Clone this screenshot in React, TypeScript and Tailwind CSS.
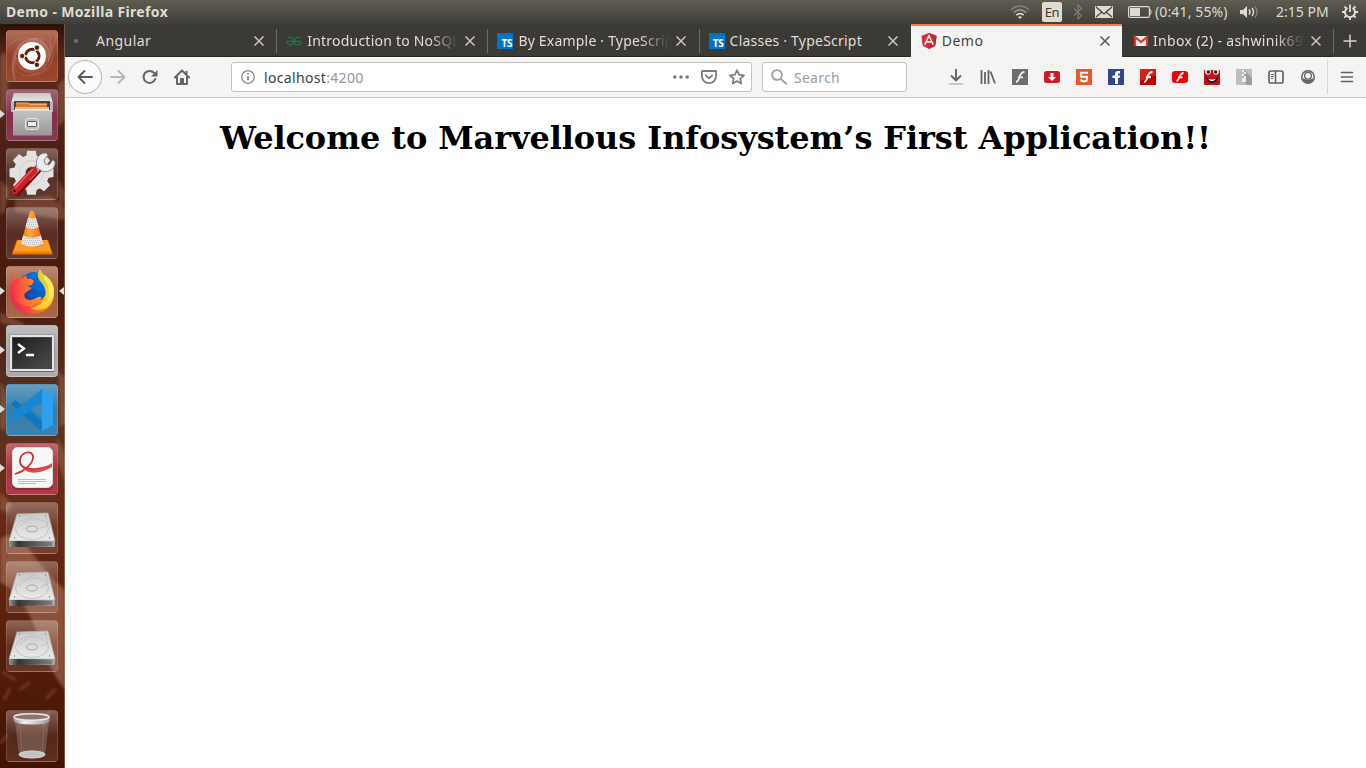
import React from "react";

type Kids = { children?: React.ReactNode };

function Icon({ children, size = 16, box = "0 0 16 16", className = "" }: Kids & { size?: number; box?: string; className?: string }) {
  return (
    <svg width={size} height={size} viewBox={box} fill="none" className={`block shrink-0 ${className}`}>
      {children}
    </svg>
  );
}

/* ---------- system panel ---------- */

function SystemBar() {
  return (
    <header className="flex h-6 shrink-0 items-center bg-linear-to-b from-[#5f5d51] to-[#3f3e39] text-[14px] leading-6 text-[#dfdbd2]">
      <div className="pl-[6px] text-[14px] font-bold tracking-[0.36px]">Demo - Mozilla Firefox</div>
      <div className="ml-auto flex h-6 items-center">
        <svg width="20" height="16" viewBox="0 0 20 16" fill="none" className="mr-[12px]" strokeWidth="1.6">
          <path d="M.8 6Q10-2 19.200 6" stroke="#85837a" />
          <path d="M3.600 8.600Q10 3 16.400 8.600" stroke="#96938a" />
          <path d="M6.300 11.200Q10 8 13.700 11.200" stroke="#dfdbd2" />
          <path d="M8 13Q10 11.400 12 13L10 15Z" fill="#dfdbd2" />
        </svg>
        <span className="mr-[10px] flex h-5 w-5 items-center justify-center rounded-[2px] bg-[#dfdbd2] text-[13px] tracking-[-0.4px] text-[#3c3b37]">En</span>
        <svg width="12" height="16" viewBox="0 0 12 16" fill="none" stroke="#7d7b73" strokeWidth="1.2" className="mr-[11px]">
          <path d="M2 4.500 9.500 11.500 6 15V1l3.500 3.500L2 11.500" />
        </svg>
        <svg width="18" height="12" viewBox="0 0 18 12" className="mr-[15px]">
          <rect width="18" height="12" fill="#dfdbd2" />
          <path d="m1 1 6 5-6 5M17 1l-6 5 6 5M1 1l8 7 8-7" fill="none" stroke="#45443e" strokeWidth="1.2" />
        </svg>
        <svg width="24" height="12" viewBox="0 0 24 12" className="mr-[3px]" fill="none">
          <rect x=".6" y=".6" width="20.800" height="10.800" rx="1.500" stroke="#dfdbd2" strokeWidth="1.200" />
          <rect x="2" y="2" width="10" height="8" fill="#dfdbd2" />
          <path d="M22.500 3.500q1.500 2.500 0 5" stroke="#dfdbd2" />
        </svg>
        <span className="w-[73px] whitespace-nowrap text-[14px] tracking-[0.13px]">(0:41, 55%)</span>
        <svg width="20" height="16" viewBox="0 0 20 16" className="ml-[12px] mr-[16px]" fill="none" strokeWidth="1.400">
          <path d="M0 6h3l4-4v12l-4-4H0z" fill="#dfdbd2" />
          <path d="M9 5.500q2 2.500 0 5M12 4q3 4 0 8" stroke="#dfdbd2" />
          <path d="M15 2.500q4 5.500 0 11" stroke="#85837a" />
        </svg>
        <span className="w-[54px] whitespace-nowrap text-[14px] tracking-[0.02px]">2:15 PM</span>
        <svg width="16" height="16" viewBox="0 0 16 16" className="ml-[12px] mr-[8px]" fill="none" stroke="#dfdbd2">
          <path d="M5.500 3.900a5 5 0 1 0 5 0" strokeWidth="2" />
          <path d="M8 .500v7.500" strokeWidth="1.800" />
          <path d="M3 8H0M16 8h-3M4.500 11.500l-2.200 2.200M11.500 11.500l2.200 2.200M8 13v3M4.300 4.300 2.500 2.500M11.700 4.300l1.800-1.800" strokeWidth="1.800" />
        </svg>
      </div>
    </header>
  );
}

/* ---------- launcher ---------- */

function UbuntuLogo() {
  return (
    <Icon size={52} box="0 0 52 52">
      <g stroke="#fff" strokeOpacity=".16" fill="none" strokeWidth=".8">
        <path d="M10 51C1 33 8 10 29 8s24 25 8 32M51 5C43 22 46 40 27 45S4 29 15 16" />
        <path d="M1 18C10 5 30 4 42 18s-4 29-18 26" />
      </g>
      <path d="M9 51C2 34 7 8 29 8c12 1 18 14 14 25C39 17 23 6 13 19 7 29 9 40 9 51" fill="#fff" opacity=".14" />
      <path d="M43 2c6 20 1 38-17 41C14 44 7 34 9 24c6 12 18 16 27 9 8-7 8-20 7-31" fill="#fff" opacity=".1" />
      <circle cx="26" cy="26" r="14" fill="#fff" />
      <circle cx="26.300" cy="26" r="6.800" stroke="#5f210c" strokeWidth="3" />
      <path d="m26 26 7-12M26 26l7 12M26 26H14" stroke="#fff" strokeWidth="1.300" />
      <circle cx="26.300" cy="26" r="5.200" fill="#fff" />
      <g fill="#5f210c" stroke="#fff" strokeWidth=".9">
        <circle cx="16.200" cy="26" r="2.700" /><circle cx="30.900" cy="17.700" r="2.700" /><circle cx="30.900" cy="34.800" r="2.700" />
      </g>
    </Icon>
  );
}

function FilesLogo() {
  return (
    <Icon size={52} box="0 0 52 52">
      <path d="M8 4h36l3 10v9H5v-9z" fill="#b5b5b5" />
      <path d="M8 4h36l2.500 9h-41z" fill="url(#cabtop)" />
      <path d="M8 12h36v10H8z" fill="#4a4340" />
      <path d="M10 14h31v8H10z" fill="#dd792f" />
      <path d="M10 14h12l2 1.500h17" stroke="#f7b064" />
      <path d="M9 18h34v4H9z" fill="#f7ead9" /><path d="M9 19h34" stroke="#e77b28" />
      <rect x="7" y="21" width="39" height="26" rx="1" fill="url(#drawer)" />
      <path d="M7 21.500h39" stroke="#dadada" />
      <path d="M7 46.500h39" stroke="#747474" />
      <rect x="19.500" y="29.500" width="13" height="11" rx="2" fill="#bcbcbc" stroke="#e4e4e4" />
      <rect x="21.500" y="32.500" width="9" height="5" rx="1" fill="#eee" stroke="#555" />
      <defs>
        <linearGradient id="cabtop" x2="0" y2="1"><stop stopColor="#c8c8c8" /><stop offset="1" stopColor="#e6e6e6" /></linearGradient>
        <linearGradient id="drawer" x2="0" y2="1"><stop stopColor="#c4c4c4" /><stop offset="1" stopColor="#969696" /></linearGradient>
      </defs>
    </Icon>
  );
}

function SettingsLogo() {
  return (
    <Icon size={52} box="0 0 52 52">
      <g transform="translate(25.500 24.700)">
        <g fill="#e2e2e0">
          <circle r="17.800" />
          {[0, 45, 90, 135, 180, 225, 270, 315].map((a) => (
            <path key={a} d="M-5.500-15-4.300-22H4.300L5.500-15Z" transform={`rotate(${a})`} />
          ))}
        </g>
        <circle r="12" stroke="#cfcfcd" />
        <circle r="6" fill="#4f2316" stroke="#b5b5b1" />
      </g>
      <path d="m11 44 21-23" stroke="#7c1013" strokeWidth="8" strokeLinecap="round" />
      <path d="m22 31 12-13" stroke="#ccc" strokeWidth="5" />
      <path d="M31 20c-2-8 1-15 9-15l2 2-4 5 1 4 4 1 4-5 2 2c0 8-7 11-13 9z" fill="#ededed" stroke="#8d8d8d" />
      <path d="m9 42.500 19-20" stroke="#c9242a" strokeWidth="7" strokeLinecap="round" />
      <path d="m9 40 18-19" stroke="#e86464" strokeWidth="1.200" />
      <circle cx="8.500" cy="43" r="1.200" fill="#4a0608" />
    </Icon>
  );
}

function VlcLogo() {
  return (
    <Icon size={52} box="0 0 52 52">
      <path d="M11 33h31l4.500 14H6z" fill="#f58a0c" /><path d="M12 33h29l4 11H8z" fill="#ff9d23" />
      <path d="M6 46.500h40.500V48H6z" fill="#bb5700" />
      <path d="M24 4.500q2-2 4 0l9.500 33q-11.500 6-23 0z" fill="url(#cone)" />
      <path d="M22.200 10.500q3.800 2.500 7.600 0l2.900 9.500q-6.700 3.500-13.300 0zM17.200 28.500q8.800 4.500 17.600 0l2.500 8.500q-11.300 5-22.600 0z" fill="#e6e7e8" />
      <path d="M22 13.500h8M21 15.500h10M21 17.500h10M20 19.500h12M18 31.500h16M17 33.500h18M16 35.500h20M16 37.500h20" stroke="#b8b8b8" strokeDasharray="1 1" />
      <defs><linearGradient id="cone"><stop stopColor="#e96900" /><stop offset=".4" stopColor="#ffa844" /><stop offset="1" stopColor="#e46200" /></linearGradient></defs>
    </Icon>
  );
}

function FirefoxLogo() {
  return (
    <Icon size={52} box="0 0 52 52">
      <path d="M7 8v6l4-3h6l9 4 9-6c8 4 13 10 13 18 0 12-9 21-22 21S4 39 4 27c0-8 1-13 3-19" fill="url(#fox)" />
      <path d="M16 11c3-3 8-5 12-5 10 0 15 9 13 19-2 9-12 14-20 10S12 20 16 11" fill="url(#globe)" />
      <path d="M5 22c1-5 4-9 8-11l3 1 4-3 1 4c3-1 5 0 7 2l-2 4-5 1 5 2-7 5c-2 4 1 7 5 7 5 0 7-4 11-3 1 1-1 4-3 5-7 7-19 5-24-5" fill="url(#head)" />
      <path d="M34 3c-3 4-3 9 1 13 7 8 6 18-2 23-3 2-6 3-9 3 12 6 25-3 24-16 0-7-3-12-8-16-3-2-5-4-6-7" fill="#ffd52b" opacity=".9" />
      <path d="M39 14c5 7 6 17 0 24 8-4 11-14 7-21-2-4-5-6-8-8 0 2 0 3 1 5" fill="#ffee58" />
      <defs>
        <linearGradient id="globe" x1="1" x2="0" y2="1"><stop stopColor="#0a86e0" /><stop offset=".5" stopColor="#0560c8" /><stop offset="1" stopColor="#1b2b83" /></linearGradient>
        <linearGradient id="fox" x1="1" x2="0" y1=".2" y2=".7"><stop stopColor="#ffe43a" /><stop offset=".4" stopColor="#ff8f23" /><stop offset=".7" stopColor="#ff4a3b" /><stop offset="1" stopColor="#ea2052" /></linearGradient>
        <linearGradient id="head" x1="1" x2="0"><stop stopColor="#ff9a20" /><stop offset=".5" stopColor="#ff6a30" /><stop offset="1" stopColor="#f0304a" /></linearGradient>
      </defs>
    </Icon>
  );
}

function TerminalLogo() {
  return (
    <Icon size={52} box="0 0 52 52">
      <rect x="3.500" y="9.500" width="45" height="37" rx="1.500" fill="#e6e6e6" stroke="#9c9c9c" />
      <rect x="6.500" y="12.500" width="39" height="31" fill="url(#term)" stroke="#444" />
      <path d="m12 19 6 4.500-6 4.500M20 30h8" stroke="#fff" strokeWidth="2.300" />
      <path d="M4 46.500h44" stroke="#666" />
      <defs><linearGradient id="term" x2="1" y2="1"><stop stopColor="#1c1c1c" /><stop offset="1" stopColor="#4b4d4b" /></linearGradient></defs>
    </Icon>
  );
}

function CodeLogo() {
  return (
    <Icon size={52} box="0 0 52 52">
      <path d="m5 20 4-4 28 22v8L33 45z" fill="#0f78c0" />
      <path d="M36 5l1 14L10 36l-5-3v-3z" fill="#1a86d0" />
      <path d="m36 5 11 5v31l-11 6z" fill="#2f9ff0" />
      <path d="M36 18v16L25 26z" fill="#4488b4" />
    </Icon>
  );
}

function EvinceLogo() {
  return (
    <Icon size={52} box="0 0 52 52">
      <rect x="6" y="5" width="41" height="42" rx="5" fill="#6c2025" opacity=".5" />
      <rect x="6.500" y="4.500" width="40" height="40" rx="5" fill="#f8f8f8" stroke="#ddd" />
      <path d="M9 31C20 28 28 19 27 13 25 7 15 9 14 17s10 13 32 5" stroke="#cf2f35" strokeWidth="1.800" />
      <path d="M16 24C24 29 36 27 46 20v4C34 31 21 32 16 24" fill="#e04a4a" />
      <path d="M12 36.500h28M12 38.500h28M12 40.500h18" stroke="#bbb" />
    </Icon>
  );
}

function DriveLogo() {
  return (
    <Icon size={52} box="0 0 52 52">
      <path d="m11 12 31-1 7 28H3z" fill="url(#disk)" stroke="#b5b5b5" strokeWidth=".7" />
      <path d="M3 39h46v5q0 1-1 1H4q-1 0-1-1z" fill="url(#diskfront)" />
      <ellipse cx="26" cy="27" rx="16.500" ry="10.500" stroke="#c4c4c4" />
      <path d="M12 14q8-2 16 0l-7 5q-5 2-8 6M40 15l2 8-7 3" stroke="#c2c2c2" />
      <ellipse cx="26" cy="27" rx="5.500" ry="3" fill="#ddd" stroke="#aaa" />
      <path d="M8 36h1M43 36h1M13 14h1M39 14h1" stroke="#888" strokeWidth="1.500" />
      <path d="M11 40h35v4H11z" fill="#3c3c3c" opacity=".35" />
      <defs>
        <linearGradient id="disk" x2="0" y2="1"><stop stopColor="#cacaca" /><stop offset="1" stopColor="#eaeaea" /></linearGradient>
        <linearGradient id="diskfront"><stop stopColor="#999" /><stop offset=".2" stopColor="#333" /><stop offset="1" stopColor="#aaa" /></linearGradient>
      </defs>
    </Icon>
  );
}

function TrashLogo() {
  return (
    <Icon size={52} box="0 0 52 52">
      <path d="m9 12 4 33q13 5 26 0l4-33z" fill="#ddd" opacity=".22" />
      <path d="m14 14 2 30M38 14l-2 30" stroke="#ddd" strokeOpacity=".15" />
      <ellipse cx="26" cy="44.500" rx="13" ry="3.500" fill="#c4c4be" stroke="#d8d8d4" />
      <path d="M7.500 7v4q3 3.500 18.500 3.500T43.500 11V7z" fill="url(#rim)" />
      <ellipse cx="25.500" cy="7" rx="17.500" ry="3.300" fill="#8a766e" stroke="#e6e6e6" strokeWidth="1.500" />
      <defs><linearGradient id="rim"><stop stopColor="#8f8f8f" /><stop offset=".3" stopColor="#f2f2f2" /><stop offset=".6" stopColor="#d0d0d0" /><stop offset="1" stopColor="#9a9a9a" /></linearGradient></defs>
    </Icon>
  );
}

function Tile({ children, tint = "bg-white/8", running = false, focused = false }: Kids & { tint?: string; running?: boolean; focused?: boolean }) {
  return (
    <div className="relative flex h-[52px] w-full shrink-0 justify-start pl-[6px]">
      <div className={`relative h-[52px] w-[52px] overflow-hidden rounded-[4px] ${tint}`}>
        <div className="absolute inset-0 rounded-[4px] border border-white/14 bg-linear-to-b from-white/25 via-transparent to-white/5" />
        <div className="relative">{children}</div>
      </div>
      {running && <span className="absolute top-[21px] left-0 h-0 w-0 border-y-[4.5px] border-l-[5px] border-y-transparent border-l-[#ddd]" />}
      {focused && <span className="absolute top-[21px] right-[1px] h-0 w-0 border-y-[4.5px] border-r-[5px] border-y-transparent border-r-[#ddd]" />}
    </div>
  );
}

function Wallpaper() {
  return (
    <svg className="absolute inset-0" width="65" height="744" viewBox="0 24 65 744" preserveAspectRatio="none">
      <defs>
        <linearGradient id="wall" x2="0" y2="1">
          <stop stopColor="#2c1109" /><stop offset=".05" stopColor="#5c2a1a" /><stop offset=".18" stopColor="#4b1f14" /><stop offset=".36" stopColor="#4b1b10" />
          <stop offset=".52" stopColor="#5a3220" /><stop offset=".65" stopColor="#662c18" /><stop offset=".8" stopColor="#5c210c" /><stop offset="1" stopColor="#421305" />
        </linearGradient>
        <filter id="soft"><feGaussianBlur stdDeviation="1.500" /></filter>
      </defs>
      <rect y="24" width="65" height="744" fill="url(#wall)" />
      <g filter="url(#soft)" fill="#b98267">
        <path opacity=".35" d="M0 58q8-18 8 20t-8 42zM58 85l7-7v40l-7 10zM0 180l9 9-4 22-5 4zM58 180l7 12-5 29zM15 200l35-4 15 12v12l-50-8z" />
        <path opacity=".35" d="M0 312q20 10 25 12l-3 3-22-4zM0 382q9 9 7 34t-7 9zM58 370l7 8v46l-5 3zM57 438l8 14v30l-9-24zM0 492l12 12-3 9-9-3z" />
        <path opacity=".5" d="M0 540q10-12 30 10 16 24 35 40v100q-17-22-26-51Q25 595 0 582z" />
      </g>
      <g filter="url(#soft)" stroke="#b5633f" strokeWidth="2" strokeOpacity=".55">
        <path d="m2 672 14 8M20 690l10-8M46 699l9-10M50 710l-8 16M4 700l6-12M0 743l8-8" />
      </g>
      <path d="M64.500 24v744" stroke="#d7cac1" strokeOpacity=".35" />
    </svg>
  );
}

function Launcher() {
  return (
    <aside className="relative w-[65px] shrink-0 overflow-hidden">
      <Wallpaper />
      <div className="relative flex h-full flex-col gap-[7px] pt-[6px] pb-[6px]">
        <Tile tint="bg-[#963f27]"><UbuntuLogo /></Tile>
        <Tile tint="bg-[#84304a]" running><FilesLogo /></Tile>
        <Tile><SettingsLogo /></Tile>
        <Tile><VlcLogo /></Tile>
        <Tile tint="bg-[#a3603f]" running focused><FirefoxLogo /></Tile>
        <Tile tint="bg-[#aaa6a8]" running><TerminalLogo /></Tile>
        <Tile tint="bg-[#347dab]" running><CodeLogo /></Tile>
        <Tile tint="bg-[#ad323c]" running><EvinceLogo /></Tile>
        <Tile><DriveLogo /></Tile>
        <Tile><DriveLogo /></Tile>
        <Tile><DriveLogo /></Tile>
        <div className="mt-auto"><Tile><TrashLogo /></Tile></div>
      </div>
    </aside>
  );
}

/* ---------- browser tabs ---------- */

function TsIcon() {
  return (
    <span className="flex h-4 w-4 shrink-0 items-end justify-end bg-[#0076c6] pr-px text-[10px] leading-[11px] font-bold tracking-[-0.2px] text-white">TS</span>
  );
}

function Tab({ icon, title, tracking, active = false, fade = false, divider = true }: { icon: React.ReactNode; title: string; tracking: string; active?: boolean; fade?: boolean; divider?: boolean }) {
  return (
    <div className={`relative flex h-[33px] w-[211.2px] shrink-0 items-center pl-[10px] ${active ? "ml-px border-t-2 border-[#f08050] bg-[#f5f4f2] pb-[2px] text-[#3f4547]" : "border-b border-[#282724] pt-px text-[#e0dcd4]"}`}>
      {icon}
      <span className={`ml-[5px] w-[152px] overflow-hidden text-[14px] leading-5 whitespace-nowrap ${tracking} ${fade ? "mask-r-from-80% mask-r-to-100%" : ""}`}>{title}</span>
      <Icon size={10} box="0 0 10 10" className="ml-[6px]"><path d="m.500.500 9 9M9.500.500l-9 9" stroke={active ? "#555" : "#cbc8c0"} strokeWidth="1.500" /></Icon>
      {divider && <span className="absolute top-[5px] -right-px h-[24px] w-px bg-[#6d6b65]" />}
    </div>
  );
}

function TabStrip() {
  return (
    <div className="flex h-[33px] shrink-0 overflow-hidden bg-[#3b3a36]">
      <Tab icon={<span className="flex w-4 shrink-0"><span className="-ml-px h-1 w-1 rounded-full bg-[#77756f]" /></span>} title="Angular" tracking="tracking-[0.45px]" />
      <Tab
        icon={<Icon><path d="M1.500 5.500Q3 3.800 5 4.300 7.300 5 7.300 8.200T4.500 12 1 8.300H15Q15 12 11.500 12T8.700 8.200 11 4.300Q13 3.800 14.500 5.500" stroke="#147d45" strokeWidth="1.200" /></Icon>}
        title="Introduction to NoSQL" tracking="tracking-[0.22px]" fade
      />
      <Tab icon={<TsIcon />} title="By Example · TypeScript" tracking="tracking-[0.2px]" fade />
      <Tab icon={<TsIcon />} title="Classes · TypeScript" tracking="tracking-[0.22px]" divider={false} />
      <Tab
        active divider={false} title="Demo" tracking="tracking-[0.5px]"
        icon={<Icon><path d="m8 0 7.500 2.700-1.200 10L8 16l-6.300-3.300L.500 2.700z" fill="#df2b36" /><path d="m8 0 7.500 2.700-1.200 10L8 16z" fill="#bd2a36" /><path d="m3.700 11.800 4.300-9 4.300 9M5.300 9h5.400" stroke="#fff" strokeWidth="1.500" /></Icon>}
      />
      <Tab
        title="Inbox (2) - ashwinik695" tracking="tracking-[0.33px]" fade
        icon={<Icon className="ml-px -mr-px"><path d="M2 3h12v10H2z" fill="#eee" /><path d="M2 13V4l6 5 6-5v9" stroke="#d8392d" strokeWidth="2.200" /><path d="m3 13 4-4M13 13 9 9" stroke="#ccc" /></Icon>}
      />
      <div className="flex flex-1 items-center justify-center"><Icon><path d="M8 1.500v13M1.500 8h13" stroke="#d8d4cb" strokeWidth="1.500" /></Icon></div>
    </div>
  );
}

/* ---------- navigation toolbar ---------- */

function Toolbar() {
  return (
    <div className="flex h-[41px] shrink-0 items-center border-b border-[#c9c7c4] bg-[#f5f4f2] text-[#5e5e5e]">
      <div className="ml-[3px] flex h-[34px] w-[34px] shrink-0 items-center justify-center rounded-full border border-[#b3b2b0] bg-[#fcfcfb]">
        <Icon><path d="M15 8H1.500M7.500 2l-6 6 6 6" stroke="#5c5c5c" strokeWidth="1.900" strokeLinecap="round" strokeLinejoin="round" /></Icon>
      </div>
      <Icon className="ml-[8px]"><path d="M1 8h13.500M8.500 2l6 6-6 6" stroke="#b8b7b5" strokeWidth="1.900" strokeLinecap="round" strokeLinejoin="round" /></Icon>
      <Icon className="ml-[16px]"><path d="M13.200 10A6 6 0 1 1 12.500 4.500" stroke="#636363" strokeWidth="2" strokeLinecap="round" /><path d="M15.500 1v6.500H9z" fill="#636363" /></Icon>
      <Icon className="ml-[16px]"><path d="m.900 8.500 7.100-7 7.100 7M3 8v7h10V8" stroke="#636363" strokeWidth="1.900" strokeLinecap="round" strokeLinejoin="round" /><path d="M6 14v-4q0-1 1-1h2q1 0 1 1v4" fill="#636363" /><path d="M12.500 2v3" stroke="#636363" strokeWidth="2" /></Icon>

      <div className="ml-[41px] flex h-[30px] w-[521px] shrink-0 items-center rounded-[3px] border border-[#c3c1be] bg-white pl-[8px]">
        <Icon><circle cx="8" cy="8" r="6.300" stroke="#858585" strokeWidth="1.200" /><path d="M8 7.200v4M8 4v1.600" stroke="#777" strokeWidth="1.700" /></Icon>
        <span className="ml-[8px] pt-[2px] text-[14px] leading-5 tracking-[0.33px] whitespace-nowrap text-[#3a4042]">localhost<span className="text-[#939697]">:4200</span></span>
        <div className="mr-[6px] ml-auto flex items-center gap-[12px]">
          <Icon><g fill="#7c7c7c"><circle cx="1.800" cy="8" r="1.800" /><circle cx="8" cy="8" r="1.800" /><circle cx="14.200" cy="8" r="1.800" /></g></Icon>
          <Icon><path d="M1.500 2h13q.6 0 .6.600V7a7.100 7.100 0 0 1-14.200 0V2.600q0-.6.600-.6Z" stroke="#7c7c7c" strokeWidth="1.800" /><path d="m4.800 6.400 3.200 3 3.200-3" stroke="#7c7c7c" strokeWidth="1.800" strokeLinecap="round" strokeLinejoin="round" /></Icon>
          <Icon><path d="m8 1.200 2 4.500 5 .600-3.700 3.400 1 4.900L8 12.100l-4.300 2.500 1-4.900L1 6.300l5-.6z" stroke="#7c7c7c" strokeWidth="1.700" strokeLinejoin="round" /></Icon>
        </div>
      </div>

      <div className="ml-[10px] flex h-[30px] w-[145px] shrink-0 items-center rounded-[3px] border border-[#c3c1be] bg-white pl-[8px]">
        <Icon><circle cx="6" cy="6" r="4.900" stroke="#a2a2a2" strokeWidth="1.900" /><path d="m9.700 9.700 5.500 5" stroke="#a2a2a2" strokeWidth="1.900" strokeLinecap="round" /></Icon>
        <span className="ml-[7px] pt-[2px] text-[14px] leading-5 tracking-[0.25px] text-[#999c9e]">Search</span>
      </div>

      <div className="ml-[41px] flex shrink-0 items-center gap-[16px]">
        <Icon><path d="M8 0v11M3 6.500l5 5 5-5" stroke="#636363" strokeWidth="1.900" /><path d="M1 15h14" stroke="#c9c8c6" strokeWidth="2" /></Icon>
        <Icon><path d="M1.500 1v14M5 3v12M8.500 1v14M10.500 2.500l4.500 12" stroke="#636363" strokeWidth="1.800" /></Icon>
        <Icon><rect width="16" height="16" fill="#6d6d6d" /><path d="M12.500 3Q9 3 7.500 8T4 13M6 8.300h5" stroke="#eee" strokeWidth="1.800" /></Icon>
        <Icon><rect y="2" width="16" height="12" rx="2.500" fill="#cd1c23" /><path d="M6.500 4h3v4H12l-4 4-4-4h2.500z" fill="#fff" /></Icon>
        <Icon><path d="M0 0h16v16H0z" fill="#e75728" /><path d="M12 3.800H4.800l.3 3.900h6l-.4 4L8 12.500l-2.700-.8-.2-1.700" stroke="#fff" strokeWidth="1.900" /></Icon>
        <Icon><rect width="16" height="16" fill="#34478c" /><path d="M7 15V9H4.500V6.500H7V5q0-3 3-3h2v2.500h-1q-1 0-1 1v1h2L11.500 9H10v6z" fill="#fff" /></Icon>
        <Icon><rect width="16" height="16" fill="#bd0000" /><path d="M0 0h16v6L0 12z" fill="#db1c18" /><path d="M12.500 3Q9 3 7.500 8T4 13M6 8.300h5" stroke="#fff" strokeWidth="2" /></Icon>
        <Icon><rect y="2" width="16" height="12" rx="3" fill="#f00000" /><path d="M11.500 4Q9 4 7.500 8T4.500 12M6 8.300h4.500" stroke="#fff" strokeWidth="1.800" /></Icon>
        <Icon><rect y="1" width="16" height="15" rx="1" fill="#c0141d" /><circle cx="4" cy="2.800" r="2.800" fill="#fff" /><circle cx="12" cy="2.800" r="2.800" fill="#fff" /><circle cx="4.300" cy="3" r="1.700" fill="#222" /><circle cx="11.700" cy="3" r="1.700" fill="#222" /><path d="M1.500 7.500q2 1 2.500 2 4 1.500 8 0 .5-1 2.500-2Q13 14 8 14T1.500 7.500" fill="#37080b" /><path d="M4 9.800q4 1.300 8 0-1.500 2.400-4 2.400T4 9.800" fill="#fff" /></Icon>
        <Icon><rect width="16" height="16" fill="#bdbdbd" /><path d="m8 1 8 8v7h-5l-4-4z" fill="#9c9c9c" /><path d="M6 1h2v2H6zM8 3h2v2H8zM6 5h2v2H6zM8 7h2v2H8zM6 9h4v4H6z" fill="#eee" /></Icon>
        <Icon><rect x="1" y="2" width="14" height="12" rx="1.700" stroke="#636363" strokeWidth="1.700" /><path d="M7.500 2v12" stroke="#636363" strokeWidth="1.500" /><path d="M3 5.500h3M3 7.500h3M3 9.500h2" stroke="#636363" /></Icon>
        <Icon><circle cx="8" cy="8" r="6.300" stroke="#636363" strokeWidth="1.500" /><path d="M2.500 9Q5 10.800 8 10.800T13.500 9Q12 14 8 14T2.500 9" fill="#636363" /><circle cx="8" cy="6.800" r="3.400" fill="#f5f4f2" stroke="#636363" strokeWidth="1.300" /></Icon>
      </div>
      <div className="ml-[11px] h-[34px] w-px bg-[#d9d7d5]" />
      <Icon className="ml-[11px]"><path d="M2.500 3.500h11M2.500 8h11M2.500 12.500h11" stroke="#606060" strokeWidth="1.600" strokeLinecap="round" /></Icon>
    </div>
  );
}

export default function App() {
  return (
    <div className="flex h-screen w-full flex-col overflow-hidden bg-white font-['Noto_Sans',sans-serif]">
      <SystemBar />
      <div className="flex min-h-0 flex-1">
        <Launcher />
        <section className="flex min-w-0 flex-1 flex-col bg-white">
          <TabStrip />
          <Toolbar />
          <main className="flex-1 pt-[21px] text-center font-['DejaVu_Serif',serif] text-black">
            <h1 className="text-[32px] leading-[38px] font-bold tracking-[-0.09px]">Welcome to Marvellous Infosystem’s First Application!!</h1>
          </main>
        </section>
      </div>
    </div>
  );
}
